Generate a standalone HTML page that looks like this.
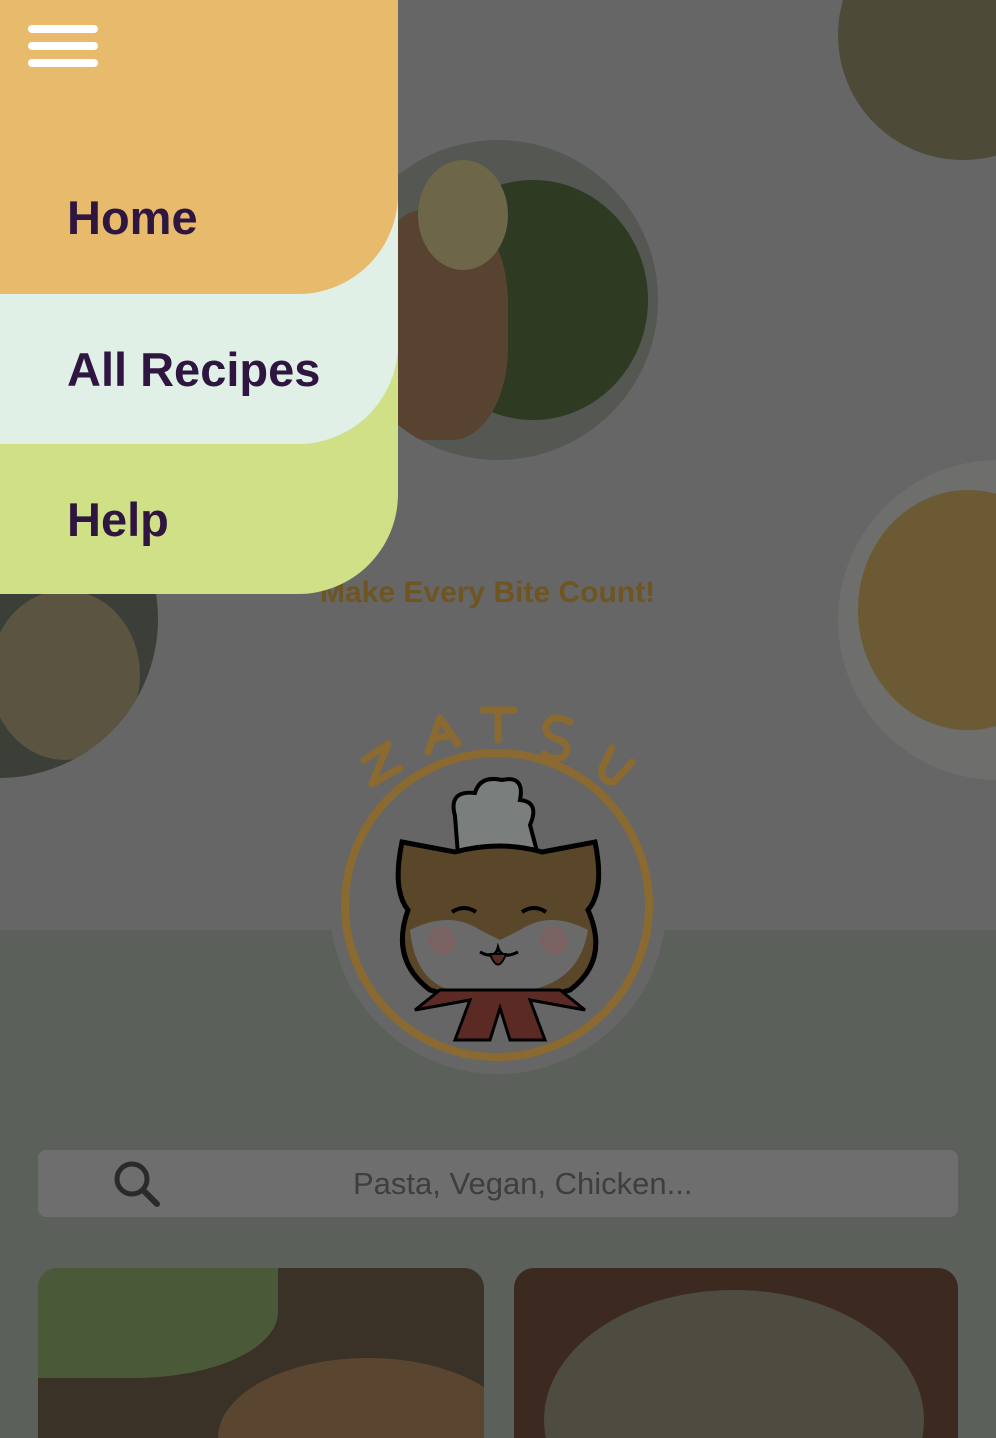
<!DOCTYPE html>
<html style="overflow:hidden;height:1438px"><head><meta charset="utf-8"><style>
html,body{margin:0;overflow:hidden}
body{width:996px;height:1438px;background:#666;font-family:"Liberation Sans",sans-serif;position:relative}
.abs{position:absolute}
.band{position:absolute;left:0;width:398px;border-bottom-right-radius:100px}
.band span{position:absolute;left:67px;font-size:47px;font-weight:bold;color:#2e1640}
</style></head><body>
<div class="abs" style="left:0;top:930px;width:996px;height:508px;background:#5b605b"></div>
<!-- plates -->
<div class="abs" style="left:338px;top:140px;width:320px;height:320px;border-radius:50%;background:#555752;overflow:hidden">
<div class="abs" style="left:80px;top:40px;width:230px;height:240px;border-radius:50%;background:#2e3a22"></div>
<div class="abs" style="left:30px;top:70px;width:140px;height:230px;border-radius:40%;background:#574330"></div>
<div class="abs" style="left:80px;top:20px;width:90px;height:110px;border-radius:50%;background:#6e6648"></div>
</div>
<div class="abs" style="left:838px;top:-90px;width:250px;height:250px;border-radius:50%;background:#4d4a38"></div>
<div class="abs" style="left:838px;top:460px;width:320px;height:320px;border-radius:50%;background:#6e6e6c;overflow:hidden">
<div class="abs" style="left:20px;top:30px;width:220px;height:240px;border-radius:50%;background:#6c5a34"></div></div>
<div class="abs" style="left:-160px;top:460px;width:318px;height:318px;border-radius:50%;background:#3c3f38;overflow:hidden">
<div class="abs" style="left:150px;top:130px;width:150px;height:170px;border-radius:50%;background:#5a5440"></div></div>
<div class="abs" style="left:320px;top:576px;font-size:30px;font-weight:bold;color:#6e5522">Make Every Bite Count!</div>
<!-- logo -->
<div class="abs" style="left:330px;top:738px;width:336px;height:336px;border-radius:50%;background:#666"></div>
<div class="abs" style="left:345px;top:753px;width:296px;height:296px;border-radius:50%;border:8px solid #8a6a30;box-sizing:content-box;margin:-4px"></div>
<svg class="abs" style="left:330px;top:690px" width="336" height="380" viewBox="0 0 336 380">
<g fill="none" stroke="#8a6a30" stroke-width="7" stroke-linecap="round" stroke-linejoin="round">
<path d="M34 70 L58 54 L42 94 L70 78"/><path d="M98 62 L110 28 L128 54 M104 48 L122 46"/><path d="M153 20 L184 20 M168 20 L168 50"/><path d="M240 32 Q222 22 216 36 Q214 46 230 50 Q242 56 234 66 Q224 72 214 64"/><path d="M282 58 L272 78 Q270 92 284 92 L302 72"/>
</g>
<path d="M125 126 Q118 100 145 103 Q150 85 172 90 Q195 85 190 110 Q210 112 200 135 L208 165 L128 165 Z" fill="#7a7e7c" stroke="#000" stroke-width="4"/>
<path d="M72 152 L125 162 Q170 150 212 162 L265 152 Q275 200 258 220 Q280 270 240 300 Q170 320 100 300 Q60 270 78 220 Q62 200 72 152 Z" fill="#5a4628" stroke="#000" stroke-width="5"/>
<path d="M80 240 Q120 220 150 240 L170 250 L190 240 Q220 220 258 240 Q250 290 200 300 Q160 310 120 300 Q85 290 80 240 Z" fill="#6a6a6a"/>
<path d="M110 300 L230 300 L255 320 L200 310 L215 350 L180 350 L170 318 L160 350 L125 350 L140 310 L85 320 Z" fill="#5c2a24" stroke="#000" stroke-width="3"/>
<circle cx="112" cy="250" r="14" fill="#7a6262"/><circle cx="224" cy="250" r="14" fill="#7a6262"/>
<path d="M122 222 Q134 214 146 222 M192 222 Q204 214 216 222" stroke="#000" stroke-width="4" fill="none"/>
<path d="M150 262 Q165 270 168 258 Q172 270 188 262" stroke="#000" stroke-width="3" fill="none"/>
<path d="M160 264 Q168 285 176 264 Z" fill="#5c2a24" stroke="#000" stroke-width="2"/>
</svg>
<!-- search -->
<div class="abs" style="left:38px;top:1150px;width:920px;height:67px;border-radius:8px;background:#6e6e6e"></div>
<svg class="abs" style="left:106px;top:1153px" width="60" height="60"><circle cx="26" cy="26" r="15" fill="none" stroke="#2a2a2a" stroke-width="5"/><path d="M37 37 L51 51" stroke="#2a2a2a" stroke-width="6" stroke-linecap="round"/></svg>
<div class="abs" style="left:353px;top:1166px;font-size:31px;color:#3e3e3e">Pasta, Vegan, Chicken...</div>
<!-- cards -->
<div class="abs" style="left:38px;top:1268px;width:446px;height:170px;border-radius:20px 20px 0 0;background:#3a3226;overflow:hidden">
<div class="abs" style="left:0;top:0;width:240px;height:110px;border-radius:0 0 60% 0;background:#4a5a38"></div>
<div class="abs" style="left:180px;top:90px;width:300px;height:160px;border-radius:50%;background:#5a4630"></div></div>
<div class="abs" style="left:514px;top:1268px;width:444px;height:170px;border-radius:20px 20px 0 0;background:#3c2a20;overflow:hidden">
<div class="abs" style="left:30px;top:22px;width:380px;height:260px;border-radius:50%;background:#4e4c40"></div></div>
<!-- menu -->
<div class="band" style="top:300px;height:294px;background:#d0e086"><span style="top:192px">Help</span></div>
<div class="band" style="top:150px;height:294px;background:#e0f0e6"><span style="top:192px">All Recipes</span></div>
<div class="band" style="top:0;height:294px;background:#e8bb6c"><span style="top:190px">Home</span></div>
<div class="abs" style="left:28px;top:25px;width:70px;height:8px;border-radius:4px;background:#fff"></div>
<div class="abs" style="left:28px;top:42px;width:70px;height:8px;border-radius:4px;background:#fff"></div>
<div class="abs" style="left:28px;top:59px;width:70px;height:8px;border-radius:4px;background:#fff"></div>
</body></html>
